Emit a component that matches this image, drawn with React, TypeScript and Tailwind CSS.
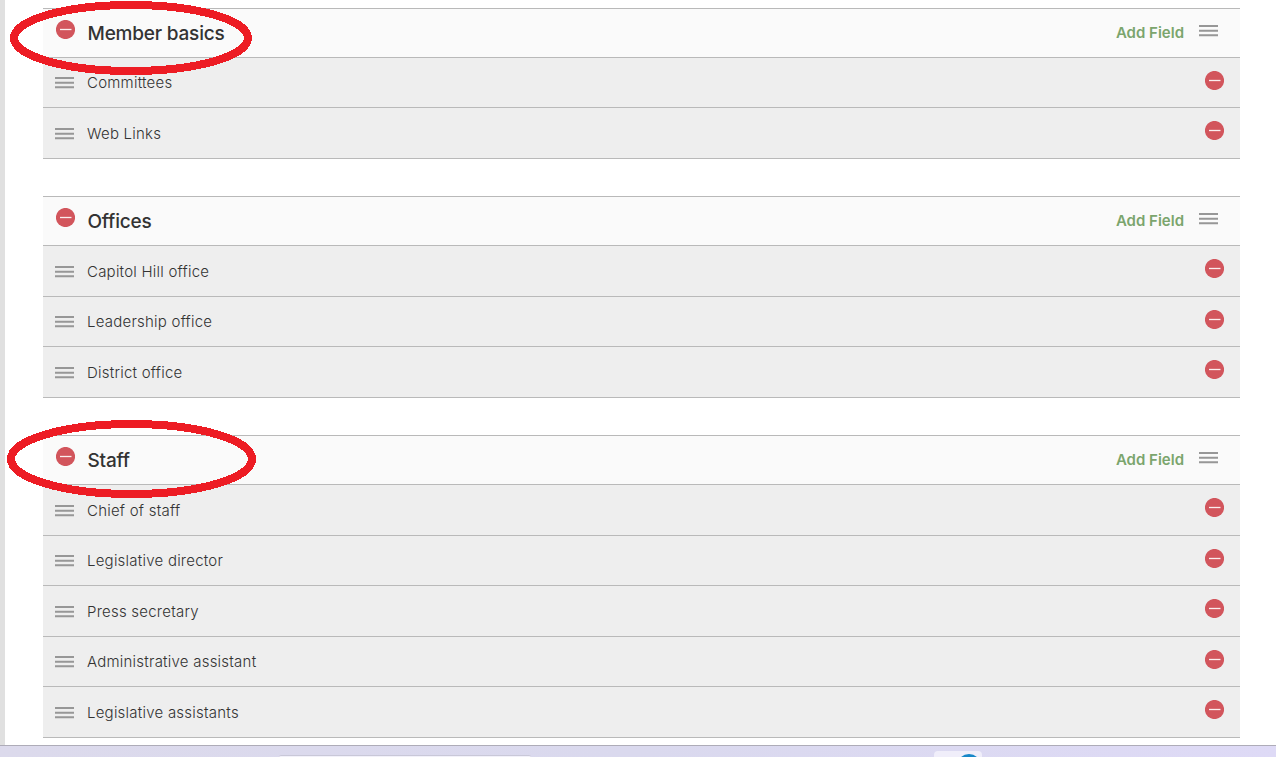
const sections = [
  { title: "Member basics", fields: ["Committees", "Web Links"] },
  { title: "Offices", fields: ["Capitol Hill office", "Leadership office", "District office"] },
  {
    title: "Staff",
    fields: [
      "Chief of staff",
      "Legislative director",
      "Press secretary",
      "Administrative assistant",
      "Legislative assistants"
    ]
  }
];

const RemoveButton = ({ label }: { label: string }) => (
  <button type="button" aria-label={`Remove ${label}`} className="block h-[19px] w-[19px] shrink-0">
    <svg width="19" height="19" viewBox="0 0 19 19">
      <circle cx="9.5" cy="9.5" r="9.6" fill="#d2555c" />
      <path d="M4 9.5H15.5" stroke="#fbeeee" strokeWidth="1.3" />
    </svg>
  </button>
);

const DragHandle = () => (
  <svg className="block shrink-0" width="19" height="12" viewBox="0 0 19 12">
    <path d="M0 1H19M0 5.7H19M0 10.3H19" stroke="#979797" strokeWidth="1.9" />
  </svg>
);

const Section = ({ title, fields }: { title: string; fields: string[] }) => (
  <section className="border-b border-[#b9b9b9]">
    <header className="flex h-[49px] items-start border-t border-[#b9b9b9] bg-[#fafafa] pl-[13px] pr-[22px]">
      <div className="pt-[11px]">
        <RemoveButton label={title} />
      </div>
      <h2 className="ml-[12.5px] flex-1 pt-[13px] text-[19px] font-medium leading-6 tracking-[-0.2px] text-[#333]">
        {title}
      </h2>
      <button type="button" className="pt-3 text-[15px] font-semibold leading-6 text-[#7ba56d]">
        Add Field
      </button>
      <div className="ml-[15px] pt-4">
        <DragHandle />
      </div>
    </header>
    {fields.map((field) => (
      <div
        key={field}
        className="flex h-[50.5px] items-start border-t border-[#b9b9b9] bg-[#eeeeee] pl-3 pr-4"
      >
        <div className="pt-[19.4px]">
          <DragHandle />
        </div>
        <span className="ml-[13px] flex-1 pt-[13.4px] text-[15px] font-light leading-6 tracking-[0.23px] text-[#333]">
          {field}
        </span>
        <div className="pt-[13px]">
          <RemoveButton label={field} />
        </div>
      </div>
    ))}
  </section>
);

const Taskbar = () => (
  <div className="flex h-3 items-end overflow-hidden border-t border-[#aeacb8] bg-linear-to-r from-[#dcdaec] via-[#dad9ee] to-[#dedaf6]">
    <div className="ml-[279px] h-[2px] w-[252px] rounded-t-lg border-t border-[#c9c8d8] bg-[#f2f1fa]" />
    <div className="ml-[403px] flex h-[6px] w-12 justify-end overflow-hidden rounded-t bg-[#f0eefa]">
      <div className="mr-px mt-[3px] h-6 w-6 shrink-0 rounded-full bg-[#1787c8]" />
    </div>
  </div>
);

export default function App() {
  return (
    <div className="relative flex h-[757px] w-[1276px] flex-col overflow-hidden bg-white font-['Inter','Liberation_Sans',sans-serif]">
      <main className="flex h-[745px] flex-col gap-[37.4px] overflow-hidden border-l-[5px] border-[#e0e0e0] pl-[38px] pr-9 pt-[7.9px]">
        {sections.map((section) => (
          <Section key={section.title} {...section} />
        ))}
      </main>
      <Taskbar />

      {/* hand-drawn highlights around two section titles */}
      <svg className="pointer-events-none absolute left-0 top-0" width="300" height="520" fill="none" shapeRendering="crispEdges">
        <ellipse cx="131" cy="38" rx="117" ry="33" stroke="#ed1c24" strokeWidth="8" />
        <ellipse cx="131.5" cy="459" rx="120.5" ry="35" stroke="#ed1c24" strokeWidth="8" />
      </svg>
    </div>
  );
}
